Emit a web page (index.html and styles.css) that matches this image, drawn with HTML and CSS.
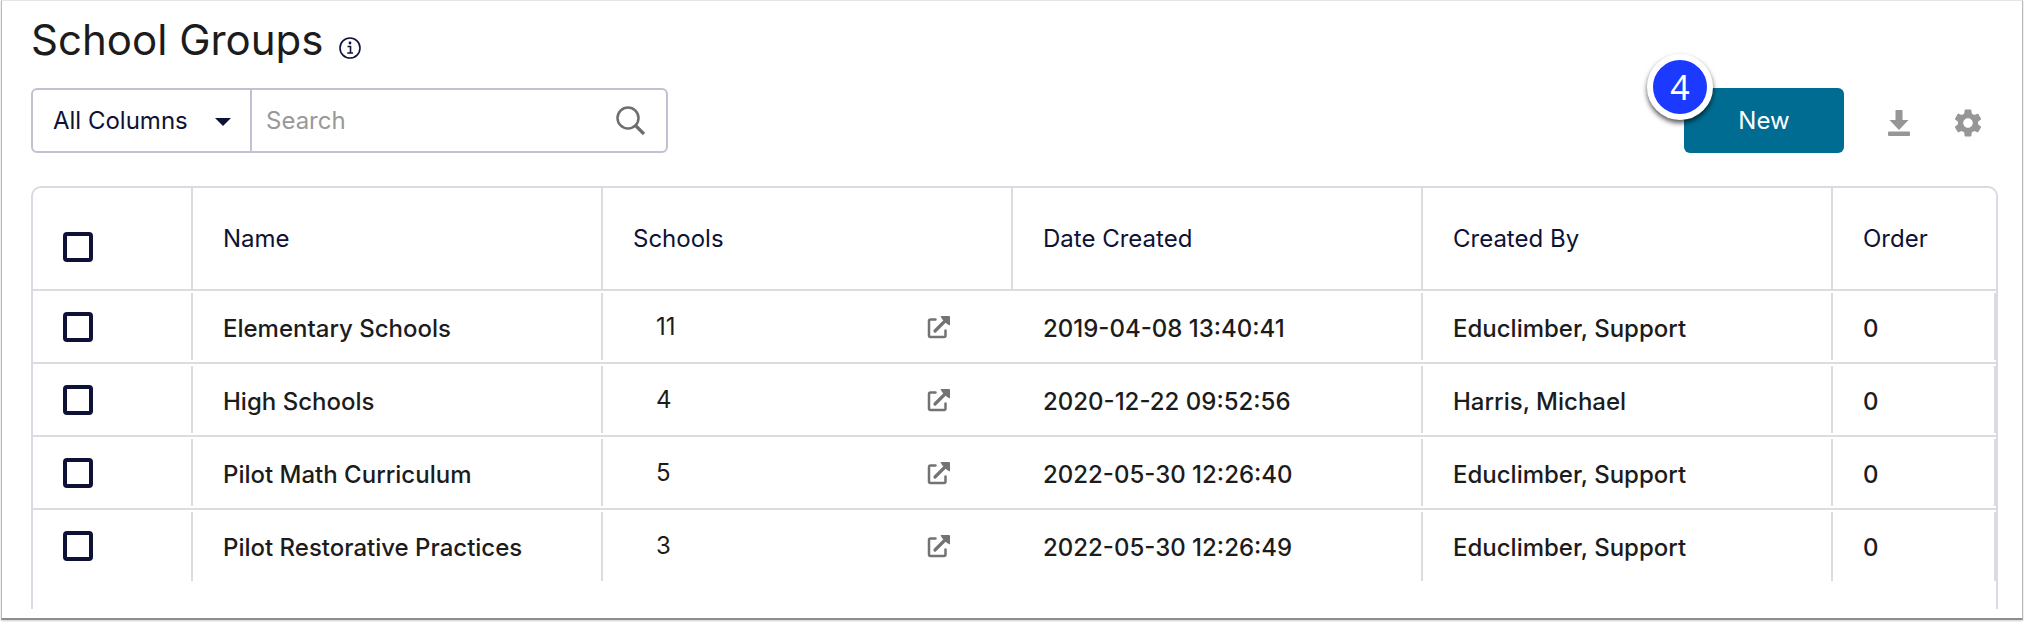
FILE: index.html
```html
<!DOCTYPE html>
<html lang="en">
<head>
<meta charset="utf-8">
<title>School Groups</title>
<link rel="stylesheet" href="styles.css">
</head>
<body>
<svg class="sprite" aria-hidden="true">
  <symbol id="open" viewBox="0 0 24 24"><path d="M8.500 4.500H3.500Q2 4.500 2 6V20.500Q2 22 3.500 22H17Q18.500 22 18.500 20.500V15.500" fill="none" stroke="currentColor" stroke-width="2.500" stroke-linecap="round"/><path d="M8 16 18.500 5.500" fill="none" stroke="currentColor" stroke-width="3.200" stroke-linecap="round"/><path d="M13.500 1H22q1 0 1 1V10.500L20 9 15 4Z" fill="currentColor"/></symbol>
</svg>
<main class="panel">
  <header class="title">
    <h1>School Groups</h1>
    <button class="icon-button" aria-label="About school groups">
      <svg width="22" height="22" viewBox="0 0 22 22"><circle cx="11" cy="11" r="10" fill="none" stroke="currentColor" stroke-width="1.600"/><circle cx="11" cy="6" r="1.400" fill="currentColor"/><path d="M8.500 9.500H11.500V16M8.300 16H14" fill="none" stroke="currentColor" stroke-width="1.600"/></svg>
    </button>
  </header>
  <div class="toolbar">
    <form class="filter">
      <div class="scope">
        <select aria-label="Search in"><option>All Columns</option></select>
        <svg class="caret" width="16" height="8" viewBox="0 0 16 8"><path d="M0 0H16L8 8Z" fill="currentColor"/></svg>
      </div>
      <input class="query" type="text" placeholder="Search" aria-label="Search">
      <button class="icon-button find" type="button" aria-label="Run search">
        <svg width="30" height="30" viewBox="0 0 30 30"><circle cx="12" cy="12" r="10.500" fill="none" stroke="currentColor" stroke-width="2.500"/><path d="M19.500 19.500 28 28" stroke="currentColor" stroke-width="3.200"/></svg>
      </button>
    </form>
    <div class="actions">
      <div class="create"><button class="new">New</button><span class="badge">4</span></div>
      <button class="icon-button" aria-label="Download"><svg width="22" height="26" viewBox="0 0 22 26"><path d="M7.500 0.500Q7.500 0 8 0H14Q14.500 0 14.500 0.500V10H20.500L11 20 1.500 10H7.500Z" fill="currentColor"/><rect x="0" y="21.500" width="22" height="4.500" rx="1" fill="currentColor"/></svg></button>
      <button class="icon-button" aria-label="Settings"><svg width="28" height="28" viewBox="2 2 20 20"><path fill="currentColor" d="M19.140 12.940c.04-.3.06-.61.06-.94 0-.32-.02-.64-.07-.94l2.030-1.580c.18-.14.23-.41.12-.61l-1.920-3.320c-.12-.22-.37-.29-.59-.22l-2.390.96c-.5-.38-1.030-.7-1.620-.94l-.36-2.540c-.04-.24-.24-.41-.48-.41h-3.840c-.24 0-.43.17-.47.41l-.36 2.540c-.59.24-1.130.57-1.620.94l-2.390-.96c-.22-.08-.47 0-.59.22L2.740 8.870c-.12.21-.08.47.12.61l2.030 1.580c-.05.3-.09.63-.09.94s.02.64.07.94l-2.030 1.580c-.18.14-.23.41-.12.61l1.920 3.320c.12.22.37.29.59.22l2.390-.96c.5.38 1.030.7 1.620.94l.36 2.540c.05.24.24.41.48.41h3.840c.24 0 .44-.17.47-.41l.36-2.540c.59-.24 1.130-.56 1.620-.94l2.390.96c.22.08.47 0 .59-.22l1.920-3.320c.12-.22.07-.47-.12-.61l-2.010-1.580zM12 15.400c-1.880 0-3.400-1.520-3.400-3.400s1.520-3.400 3.400-3.400 3.400 1.520 3.400 3.400-1.520 3.400-3.400 3.400z"/></svg></button>
    </div>
  </div>
  <div class="grid">
    <table>
      <colgroup><col class="col-check"><col class="col-data"><col class="col-data"><col class="col-data"><col class="col-data"><col></colgroup>
      <thead>
        <tr><th><input type="checkbox" aria-label="Select all"></th><th>Name</th><th>Schools</th><th>Date Created</th><th>Created By</th><th>Order</th></tr>
      </thead>
      <tbody>
        <tr><td><input type="checkbox" aria-label="Select Elementary Schools"></td><td>Elementary Schools</td><td><div class="count">11<a href="#" aria-label="Open schools"><svg width="24" height="24"><use href="#open"/></svg></a></div></td><td>2019-04-08 13:40:41</td><td>Educlimber, Support</td><td>0</td></tr>
        <tr><td><input type="checkbox" aria-label="Select High Schools"></td><td>High Schools</td><td><div class="count">4<a href="#" aria-label="Open schools"><svg width="24" height="24"><use href="#open"/></svg></a></div></td><td>2020-12-22 09:52:56</td><td>Harris, Michael</td><td>0</td></tr>
        <tr><td><input type="checkbox" aria-label="Select Pilot Math Curriculum"></td><td>Pilot Math Curriculum</td><td><div class="count">5<a href="#" aria-label="Open schools"><svg width="24" height="24"><use href="#open"/></svg></a></div></td><td>2022-05-30 12:26:40</td><td>Educlimber, Support</td><td>0</td></tr>
        <tr><td><input type="checkbox" aria-label="Select Pilot Restorative Practices"></td><td>Pilot Restorative Practices</td><td><div class="count">3<a href="#" aria-label="Open schools"><svg width="24" height="24"><use href="#open"/></svg></a></div></td><td>2022-05-30 12:26:49</td><td>Educlimber, Support</td><td>0</td></tr>
      </tbody>
    </table>
  </div>
</main>
</body>
</html>
```
FILE: styles.css
```css
* { box-sizing: border-box; }
body {
  margin: 0;
  background: #fff;
  color: #1c1c1c;
  font: 24px/32px Inter, "Liberation Sans", sans-serif;
}
button, input, select { font: inherit; color: inherit; margin: 0; }
.sprite { display: none; }
.panel {
  margin: 0 1px 2px;
  padding: 12px 24px 9px 29px;
  border: 1px solid #b9b9b9;
  border-top-color: #e4e4e4;
  border-bottom: 2px solid #8e8e8e;
  box-shadow: 0 1px 2px #ccc;
}
.title { display: flex; align-items: center; gap: 16px; }
h1 { margin: 0; font-size: 42px; line-height: 54px; font-weight: 400; }
.icon-button {
  display: flex;
  padding: 0;
  border: 0;
  background: none;
  color: #969696;
}
.title .icon-button { color: #0d1236; padding-top: 16px; }
.toolbar { display: flex; justify-content: space-between; align-items: center; margin-top: 21px; }
.filter {
  display: flex;
  width: 637px;
  height: 65px;
  border: 2px solid #c1c1d2;
  border-radius: 6px;
  color: #0d1236;
}
.scope { position: relative; width: 219px; border-right: 2px solid #c1c1d2; }
.scope select {
  width: 100%;
  height: 100%;
  padding: 0 20px;
  border: 0;
  background: none;
  appearance: none;
}
.caret { position: absolute; right: 19px; top: 28px; pointer-events: none; }
.query { flex: 1; min-width: 0; padding: 0 14px; border: 0; background: none; outline: 0; }
.query::placeholder { color: #999; opacity: 1; }
.find { align-items: center; padding-right: 20px; color: #6e6e6e; }
.actions { display: flex; align-items: center; padding-right: 16px; }
.create { position: relative; margin-right: 44px; }
.new {
  display: block;
  width: 160px;
  height: 65px;
  border: 0;
  border-radius: 6px;
  background: #006c91;
  color: #fff;
}
.badge {
  position: absolute;
  left: -37px;
  top: -34px;
  width: 66px;
  height: 66px;
  border: 6px solid #fff;
  border-radius: 50%;
  background: #1c39ff;
  box-shadow: 0 3px 5px rgba(0, 0, 0, .65);
  color: #fff;
  font: 34px/54px "Noto Sans", sans-serif;
  text-align: center;
}
.actions > .icon-button { padding-top: 4px; }
.actions > .icon-button + .icon-button { margin-left: 44px; }
.grid {
  margin-top: 33px;
  padding-bottom: 26px;
  border: 1px solid #dadae2;
  border-width: 2px 2px 0;
  border-radius: 10px 10px 0 0;
}
table { width: 100%; table-layout: fixed; border-spacing: 0; }
.col-check { width: 160px; }
.col-data { width: 410px; }
th, td { padding: 0 30px; text-align: left; white-space: nowrap; }
th {
  height: 103px;
  border-right: 2px solid #dcdcdf;
  border-bottom: 2px solid #dcdcdf;
  color: #0d1236;
  font-weight: 400;
}
th:last-child { border-right: 0; }
td {
  height: 73px;
  padding-top: 4px;
  border-bottom: 2px solid #dcdcdf;
  background: linear-gradient(#dcdcdf, #dcdcdf) right center / 2px calc(100% - 4px) no-repeat;
  font-weight: 500;
}
td:nth-child(3) { background: none; padding: 0 62px 0 53px; font-weight: 400; }
tr:last-child td { border-bottom-color: transparent; background-position: right bottom; background-size: 2px calc(100% - 2px); }
th:first-child { padding-top: 16px; }
td:first-child { padding-top: 0; }
input[type="checkbox"] {
  display: block;
  width: 30px;
  height: 30px;
  border: 4px solid #0d1236;
  border-radius: 4px;
  appearance: none;
}
.count { display: flex; justify-content: space-between; align-items: center; }
.count a { display: flex; color: #737373; }
```
